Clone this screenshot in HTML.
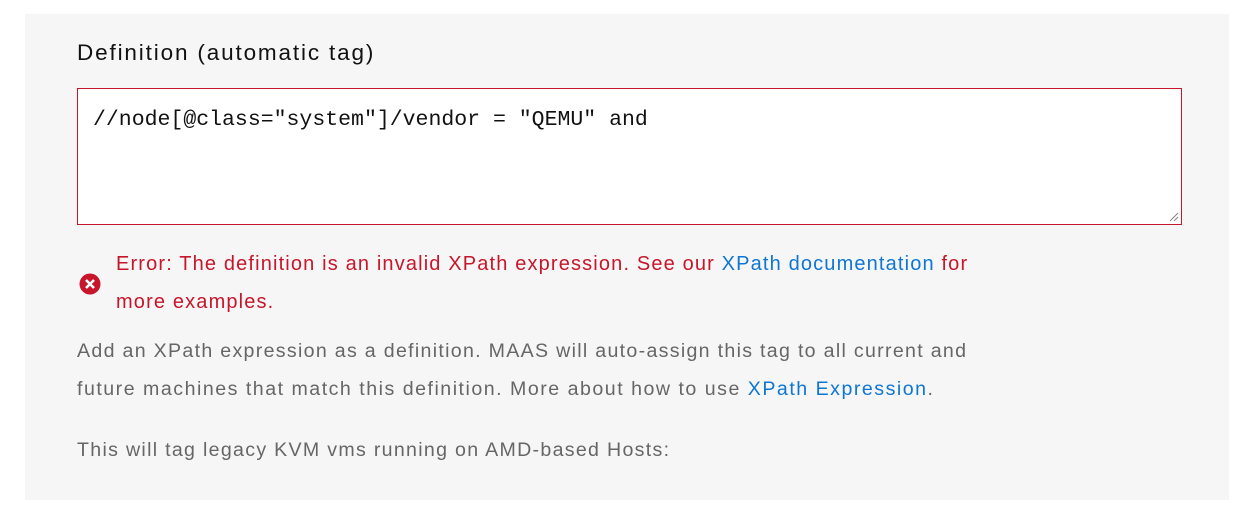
<!DOCTYPE html>
<html><head><style>
body{margin:0;background:#fff;width:1254px;height:517px;overflow:hidden;font-family:"Liberation Sans",sans-serif;}
.panel{position:absolute;left:25px;top:14px;width:1204px;height:486px;background:#f6f6f6;}
.t{position:absolute;white-space:nowrap;}
.title{left:77px;top:40px;font-size:22.5px;color:#111;letter-spacing:1.85px;}
.ta{position:absolute;left:77px;top:88px;width:1103px;height:135px;background:#fff;border:1px solid #c7162b;}
.code{left:93px;top:108px;font-family:"Liberation Mono",monospace;font-size:21.5px;color:#111;}
.err{color:#c7162b;font-size:20px;letter-spacing:1.15px;}
a{color:#0e76d3;text-decoration:none}
.help{color:#666;font-size:19.6px;letter-spacing:1.3px;}
</style></head><body>
<div class="panel"></div>
<div class="t title">Definition (automatic tag)</div>
<div class="ta"><svg style="position:absolute;right:2px;bottom:2px" width="10" height="10"><path d="M1 9L9 1M5 9L9 5" stroke="#888" stroke-width="1"/></svg></div>
<div class="t code">//node[@class="system"]/vendor = "QEMU" and</div>
<svg style="position:absolute;left:79px;top:273px" width="22" height="22"><circle cx="11" cy="11" r="10.5" fill="#c7162b"/><path d="M7 7L15 15M15 7L7 15" stroke="#fff" stroke-width="2.6"/></svg>
<div class="t err" style="left:116px;top:253px">Error: The definition is an invalid XPath expression. See our <a>XPath documentation</a> for</div>
<div class="t err" style="left:116px;top:291px">more examples.</div>
<div class="t help" style="left:77px;top:340px">Add an XPath expression as a definition. MAAS will auto-assign this tag to all current and</div>
<div class="t help" style="left:77px;top:378px;letter-spacing:1.5px">future machines that match this definition. More about how to use <a>XPath Expression</a>.</div>
<div class="t help" style="left:77px;top:439px">This will tag legacy KVM vms running on AMD-based Hosts:</div>
</body></html>
